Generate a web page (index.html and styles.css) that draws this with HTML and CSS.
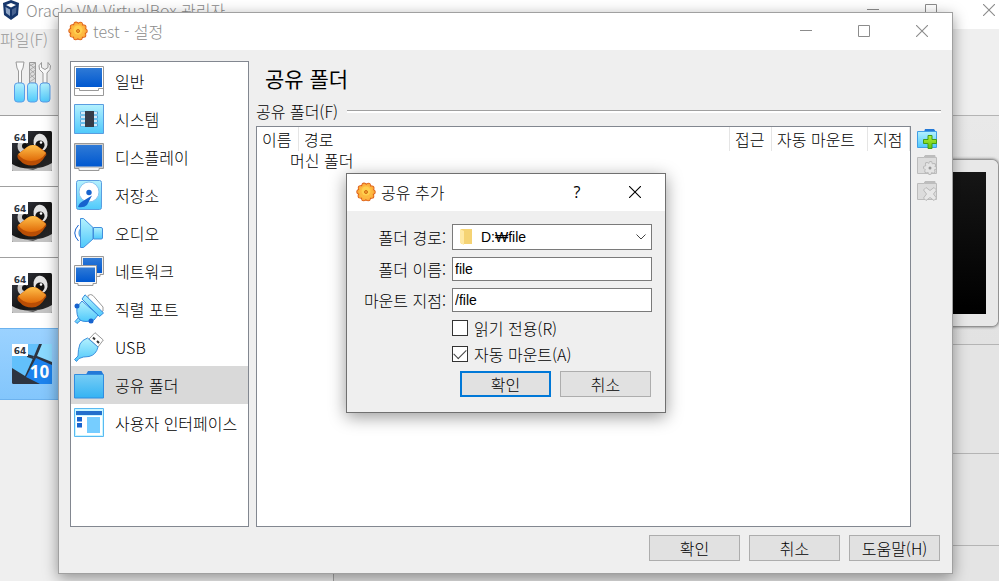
FILE: index.html
```html
<!DOCTYPE html>
<html lang="ko">
<head>
<meta charset="utf-8">
<meta name="viewport" content="width=device-width, initial-scale=1">
<title>test - 설정</title>
<link rel="stylesheet" href="styles.css">
</head>
<body>
<svg class="defs" aria-hidden="true">
  <defs>
    <linearGradient id="screen" x1="0" y1="0" x2="0" y2="1"><stop offset="0" stop-color="#2f7ad6"/><stop offset="1" stop-color="#0058d0"/></linearGradient>
    <linearGradient id="sky" x1="0" y1="0" x2="0" y2="1"><stop offset="0" stop-color="#b4f1fe"/><stop offset="1" stop-color="#4fc9fb"/></linearGradient>
    <linearGradient id="folderFill" x1="0" y1="0" x2="0" y2="1"><stop offset="0" stop-color="#78cdf5"/><stop offset="1" stop-color="#34b3f3"/></linearGradient>
    <linearGradient id="beak" x1="0" y1="0" x2="0" y2="1"><stop offset="0" stop-color="#ffc04a"/><stop offset="1" stop-color="#e06a08"/></linearGradient>
    <linearGradient id="fur" x1="0" y1="0" x2="1" y2="1"><stop offset="0" stop-color="#3a3e4a"/><stop offset=".5" stop-color="#151515"/><stop offset="1" stop-color="#2b2b2b"/></linearGradient>
    <linearGradient id="pane" x1="0" y1="0" x2="1" y2="1"><stop offset="0" stop-color="#8ed8ff"/><stop offset="1" stop-color="#3fa9f6"/></linearGradient>
    <linearGradient id="green" x1="0" y1="0" x2="0" y2="1"><stop offset="0" stop-color="#b4ee3c"/><stop offset="1" stop-color="#5fc40c"/></linearGradient>
  </defs>
  <symbol id="gear" viewBox="0 0 20 20">
    <circle cx="10" cy="10" r="8.600" fill="#dd5f18"/>
    <g fill="none" stroke-linecap="round"><circle cx="10" cy="10" r="7.200" stroke="#dd5f18" stroke-width="5" stroke-dasharray="0 4.524"/><circle cx="10" cy="10" r="6.800" stroke="#fbab3c" stroke-width="4" stroke-dasharray="0 4.273"/></g>
    <circle cx="10" cy="10" r="7" fill="#fdb940"/><circle cx="10" cy="9" r="4.500" fill="#ffd04e"/><circle cx="10" cy="10" r="1.500" fill="#f3a02c" stroke="#cf6c14"/>
  </symbol>
  <symbol id="min" viewBox="0 0 12 12"><path d="M0 5.500h12" stroke="currentColor"/></symbol>
  <symbol id="max" viewBox="0 0 12 12"><path d="M.5.5h11v11H.5z" fill="none" stroke="currentColor"/></symbol>
  <symbol id="close" viewBox="0 0 12 12"><path d="M0 0l12 12M12 0L0 12" stroke="currentColor" stroke-width="1.100"/></symbol>
  <symbol id="tux" viewBox="0 0 40 40">
    <rect width="40" height="40" rx="1.500" fill="url(#fur)"/>
    <path d="M0 33q8 5 20 4.500T40 32v6.500q0 1.500-1.500 1.500h-37Q0 40 0 38.500z" fill="#c4c4c4"/><path d="M12 37.300q8 1 17-1.500l-8 3.200z" fill="#555"/>
    <ellipse cx="28.500" cy="11.500" rx="7" ry="8.800" fill="#e4e4e4" transform="rotate(-10 28.500 11.500)"/><circle cx="28" cy="14" r="4.600" fill="#111"/><circle cx="29" cy="11.500" r="1.300" fill="#fff"/>
    <ellipse cx="10.500" cy="15" rx="5" ry="7" fill="#ccc"/><circle cx="13" cy="15" r="3" fill="#111"/>
    <path d="M5.500 24q4-4 9-7.500 6-4 11-1.500 5 3 8.500 6.500 1 2-1 4-5 9-13 9-8 0-12-5-3-2-2.500-5.500z" fill="#b94e05"/>
    <path d="M6 23q5-3 9-7 5-3.500 10-1 4 3 9 7-5 8-15 8-8 0-13-7z" fill="url(#beak)"/>
    <rect width="16" height="12" fill="#fff"/><text x="8" y="10" class="badge">64</text>
  </symbol>
  <symbol id="win10" viewBox="0 0 40 40">
    <rect width="40" height="40" rx="1.500" fill="#2d3441"/>
    <path d="M0 8L16 0h11l-5 12-9 20L0 24z" fill="#62c0fb"/><path d="M15 10l7 2-1 3-6-2z" fill="#2d3441"/><path d="M30 0h10v18l-15-6z" fill="#8bdaff"/><path d="M24 14l16 7v19H28l-14-7z" fill="#1c83ee"/>
    <rect width="16" height="12" fill="#fff"/><text x="8" y="10" class="badge">64</text><text x="27.500" y="34" class="ten">10</text>
  </symbol>
  <symbol id="monitor" viewBox="0 0 30 30"><path d="M.5 1.500h29v25H25v2H5v-2H.5z" fill="#f4f4f4" stroke="#999"/><path d="M1 2h28v24H1z" fill="#ccc"/><path d="M2 3h26v21.500H2z" fill="url(#screen)"/></symbol>
  <symbol id="folderGrey" viewBox="0 0 20 20"><path d="M.5 2.500H7l1-2h10v2h1.500v16H.5z" fill="#dcdcdc" stroke="#bcbcbc"/><path d="M8 1h10v2H7z" fill="#bdbdbd"/></symbol>
</svg>

<main class="desktop">
  <section class="window manager" aria-label="Oracle VM VirtualBox 관리자">
    <header class="titlebar">
      <svg class="app-icon" viewBox="0 0 20 20"><path d="M10 0l8 3-1 12-7 5-7-5L2 3z" fill="#16366b"/><path d="M10 3l5 2-5 2.500L5 5z" fill="#fff"/><path d="M4.500 7L9 9.500V16l-4-3z" fill="#8ea4c5"/><path d="M15.500 7L11 9.500V16l4-3z" fill="#486391"/></svg>
      <span class="caption">Oracle VM VirtualBox 관리자</span>
      <div class="controls"><button aria-label="최소화"><svg><use href="#min"/></svg></button><button aria-label="최대화"><svg><use href="#max"/></svg></button><button aria-label="닫기"><svg><use href="#close"/></svg></button></div>
    </header>
    <nav class="menubar"><button>파일(F)</button></nav>
    <div class="manager-body">
      <div class="machines">
        <div class="tools"><svg viewBox="0 0 38 42">
          <path d="M2 1h8l-1 6-1.500 3v12h-3V10L3 7z" fill="#fafafa" stroke="#999"/>
          <path d="M15.500 1.500h6V22h-6z" fill="#ddd" stroke="#999"/><path d="M15.500 5l6-3M15.500 9l6-4M15.500 13l6-4M15.500 17l6-4M15.500 21l6-4M15.500 3l6 5M15.500 8l6 5M15.500 13l6 5" stroke="#999" stroke-width=".7"/>
          <path d="M27.500 1.500q-4 3-2 7l3.500 3.500v10h4V12l3-3.500q2-4-2-7v5l-3 2-3.500-2z" fill="#fafafa" stroke="#999"/>
          <g fill="url(#sky)" stroke="#5a9de8"><rect x=".5" y="22" width="10" height="19" rx="3"/><rect x="13.500" y="22" width="10" height="19" rx="3"/><rect x="26" y="22" width="10" height="19" rx="3"/></g></svg></div>
        <ul class="machine-list">
          <li><svg><use href="#tux"/></svg></li><li><svg><use href="#tux"/></svg></li><li><svg><use href="#tux"/></svg></li>
          <li class="active"><svg><use href="#win10"/></svg></li>
        </ul>
      </div>
      <div class="details"><div class="band head"></div><div class="band preview"><div class="display"></div></div><div class="band mid"></div><div class="band low"></div><div class="rest"></div></div>
    </div>
  </section>

  <section class="window settings" aria-label="test - 설정">
    <header class="titlebar">
      <svg class="app-icon"><use href="#gear"/></svg><h1 class="caption">test - 설정</h1>
      <div class="controls"><button aria-label="최소화"><svg><use href="#min"/></svg></button><button aria-label="최대화"><svg><use href="#max"/></svg></button><button aria-label="닫기"><svg><use href="#close"/></svg></button></div>
    </header>
    <div class="settings-body">
      <nav class="categories">
        <button><svg viewBox="0 0 30 30"><path d="M.5.500h29v29H.5z" fill="#fff" stroke="#999"/><path d="M2 2h26v19H2z" fill="url(#screen)"/><path d="M1 22.500h4.500v2h19v-2H29" fill="none" stroke="#999"/></svg>일반</button>
        <button><svg viewBox="0 0 30 30"><path d="M.5.5h29v29H.5z" fill="url(#sky)" stroke="#5a9de0"/><path d="M6 9h18M6 13h18M6 17h18M6 21h18" stroke="#5aa4dc" stroke-width="3"/><path d="M7 9h16M7 13h16M7 17h16M7 21h16" stroke="#fff" stroke-width="1.500"/><path d="M11 7h9v16h-9z" fill="#353c49"/></svg>시스템</button>
        <button><svg><use href="#monitor"/></svg>디스플레이</button>
        <button><svg viewBox="0 0 30 30"><rect x="2.500" y=".5" width="25" height="29" rx="2" fill="url(#sky)" stroke="#5a9de0"/><circle cx="15" cy="12" r="10" fill="#fff" stroke="#8cc5f0"/><circle cx="15" cy="12.500" r="2.700" fill="#1763ce"/><path d="M18 15.500L13 25q-3 3-9 2 1-4 5-6z" fill="#1763ce"/></svg>저장소</button>
        <button><svg viewBox="0 0 30 30"><g fill="url(#sky)" stroke="#428fdd"><path d="M9 10q-4 0-4 5t4 5z"/><path d="M6.500.500h3L19 9.500V21L9.500 29.500h-3z"/><path d="M19.500 9.500h7.500q1.500 0 1.500 1.500v9q0 1-1.500 1h-7.500z"/></g><path d="M4.500 7Q-3 15 4.500 23" fill="none" stroke="#1763ce"/></svg>오디오</button>
        <button><svg viewBox="0 0 30 30"><path d="M7.500.500h22v18H26v2H7.500z" fill="#eee" stroke="#999"/><path d="M9 2h19v15H9z" fill="url(#screen)"/><path d="M.5 9.500h22v18H19v2H4v-2H.5z" fill="#f7f7f7" stroke="#999"/><path d="M2 11.500h19V26H2z" fill="url(#screen)"/></svg>네트워크</button>
        <button><svg viewBox="0 0 30 30"><path d="M14 1.500q3-2 5 0L29 13v4l-3 2L14 5z" fill="#fff" stroke="#999"/><g fill="url(#sky)" stroke="#348bdd"><path d="M5 23l3 2-5 4.500-2-2z"/><path d="M8 7l16 14-4 5q-9 3-14 0-4-4-3-13z"/><path d="M11 .8L29.500 19l-4 3.500L8 5z"/></g><circle cx="3" cy="12" r="2.500" fill="#1763ce"/><circle cx="17" cy="27" r="2.500" fill="#1763ce"/></svg>직렬 포트</button>
        <button><svg viewBox="0 0 30 30"><path d="M21 .7L29.300 8 24 15l-9-8z" fill="#fff" stroke="#999"/><path d="M13.500 6L24 15q-2 8-9 9.500-6 0-10 2L2.500 29.500.5 27.500 4 24q0-7 2-12 2-4 7.500-6z" fill="url(#sky)" stroke="#3c91de"/><path d="M19 5.500l2 2M23 9l2 2" stroke="#333" stroke-width="2"/></svg>USB</button>
        <button class="active" aria-current="page"><svg viewBox="0 0 30 30"><path d="M12 4.500l2-3.500h13.500l2 3.500z" fill="#2479d7"/><path d="M.5 4.500h29v23.500H.5z" fill="url(#folderFill)" stroke="#318de0"/></svg>공유 폴더</button>
        <button><svg viewBox="0 0 30 30"><path d="M.5.5h29v28H.5z" fill="#c9f6ff" stroke="#59b9f2"/><path d="M2 8h26v19H2z" fill="#fff"/><path d="M2 3h26v4H2z" fill="#236fcc"/><path d="M3 9h5v4.500H3zM3 15h5v4.500H3z" fill="#1763ce"/><path d="M13 9h13v16H13z" fill="#76cdff"/></svg>사용자 인터페이스</button>
      </nav>
      <div class="page">
        <h2>공유 폴더</h2>
        <div class="group-title"><span>공유 폴더(F)</span></div>
        <div class="folders">
          <div class="tree">
            <table>
              <colgroup><col class="narrow"><col><col class="narrow"><col class="wide"><col class="narrow"></colgroup>
              <thead><tr><th>이름</th><th>경로</th><th>접근</th><th>자동 마운트</th><th>지점</th></tr></thead>
              <tbody><tr><td colspan="5">머신 폴더</td></tr></tbody>
            </table>
          </div>
          <div class="actions">
            <button aria-label="공유 폴더 추가"><svg viewBox="0 0 20 20"><path d="M7 3l1-3h9l2 3z" fill="#2479d7"/><path d="M.5 2.500h19v16H.5z" fill="url(#sky)" stroke="#419ee6"/><path d="M11 6.500h4v4h4.500v4H15v5h-4v-5H6.500v-4H11z" fill="url(#green)" stroke="#429e17"/></svg></button>
            <button aria-label="공유 폴더 편집" disabled><svg viewBox="0 0 20 20"><use href="#folderGrey"/><g fill="none" stroke-linecap="round"><circle cx="13" cy="13" r="5" stroke="#b5b5b5" stroke-width="4" stroke-dasharray="0 3.927"/><circle cx="13" cy="13" r="4.700" stroke="#e4e4e4" stroke-width="2.600" stroke-dasharray="0 3.691"/></g><circle cx="13" cy="13" r="4.600" fill="#e4e4e4"/><circle cx="13" cy="13" r="1.500" fill="#999"/></svg></button>
            <button aria-label="공유 폴더 제거" disabled><svg viewBox="0 0 20 20"><use href="#folderGrey"/><path d="M9 6.500l4 3 4-3 2.500 2.500-3 4 3 4-2.500 2.500-4-3-4 3L6.500 17l3-4-3-4z" fill="#e7e7e7" stroke="#b9b9b9" stroke-linejoin="round"/></svg></button>
          </div>
        </div>
      </div>
    </div>
    <footer class="buttons"><button class="push">확인</button><button class="push">취소</button><button class="push">도움말(H)</button></footer>
  </section>

  <section class="window share" role="dialog" aria-label="공유 추가">
    <header class="titlebar">
      <svg class="app-icon"><use href="#gear"/></svg><h2 class="caption">공유 추가</h2>
      <div class="controls"><button aria-label="도움말" class="help">?</button><button aria-label="닫기"><svg><use href="#close"/></svg></button></div>
    </header>
    <form class="share-form">
      <label for="path">폴더 경로:</label>
      <div class="path">
        <select id="path"><option>D:₩file</option></select>
        <svg class="folder" viewBox="0 0 12 18"><path d="M1 1h11v15H1z" fill="#f5d374"/><path d="M0 1l4 2v14L0 15z" fill="#ffe9a5"/></svg>
        <svg class="chevron" viewBox="0 0 10 6"><path d="M.5.500L5 5 9.500.500" fill="none" stroke="#444"/></svg>
      </div>
      <label for="name">폴더 이름:</label><input id="name" type="text" value="file">
      <label for="mount">마운트 지점:</label><input id="mount" type="text" value="/file">
      <label class="check"><input type="checkbox">읽기 전용(R)</label>
      <label class="check"><input type="checkbox" checked>자동 마운트(A)</label>
      <div class="buttons"><button type="button" class="push primary">확인</button><button type="button" class="push">취소</button></div>
    </form>
  </section>
</main>
</body>
</html>
```
FILE: styles.css
```css
* { box-sizing: border-box; }

body {
  margin: 0;
  font: 300 16px/20px "Noto Sans CJK KR", sans-serif;
  color: #000;
}

button, input, select { font: inherit; color: inherit; margin: 0; padding: 0; }
button { border: 0; background: none; }
h1, h2, ul { margin: 0; padding: 0; font-weight: inherit; }
ul { list-style: none; }
svg { display: block; flex: none; }
.defs { position: absolute; width: 0; height: 0; }
.badge { font: bold 9px "DejaVu Sans", sans-serif; fill: #2d3441; text-anchor: middle; }
.ten { font: bold 17px "Noto Sans", sans-serif; fill: #fff; text-anchor: middle; }

.desktop { position: relative; height: 100vh; overflow: hidden; background: #efefef; }
.window { position: absolute; display: flex; flex-direction: column; background: #efefef; }

/* Title bars */
.titlebar {
  display: flex;
  align-items: center;
  flex: none;
  height: 37px;
  padding: 0 0 2px 9px;
  gap: 5px;
  background: #fff;
}
.app-icon { width: 20px; height: 20px; }
.caption { flex: 1; font-size: 16px; line-height: 20px; white-space: nowrap; color: #8c8c8c; }
.controls { display: flex; padding-right: 1px; color: #8c8c8c; }
.controls button { display: grid; place-items: center; width: 58px; height: 34px; }
.controls svg { width: 12px; height: 12px; }

/* Manager window */
.manager { top: -8px; right: -20px; bottom: 0; left: 0; }
.manager .titlebar { padding-left: 1px; }
.menubar { flex: none; height: 21px; color: #999; }
.menubar button { display: block; font-size: 16px; line-height: 20px; }
.manager-body { display: flex; flex: 1; }
.machines { flex: none; width: 334px; border-right: 1px solid #a8a8a8; }
.tools { height: 65px; padding: 11px 14px; }
.tools svg { width: 38px; height: 42px; }
.machine-list li { height: 71px; padding: 15px 12px; border-top: 1px solid #a0a0a0; background: #fff; }
.machine-list svg { width: 40px; height: 40px; }
.machine-list .active { border-top-color: #6cb2ee; border-bottom: 1px solid #6cb2ee; background: linear-gradient(#9bd2ff, #83c6fc); height: 72px; }
.details { display: flex; flex-direction: column; flex: 1; background: #e4e4e4; }
.band { flex: none; border-bottom: 1px solid #b4b4b4; }
.head { height: 66px; background: #efefef; }
.preview { height: 229px; padding: 44px 21px 0; background: linear-gradient(#e9e9e9, #e2e2e2); }
.display {
  height: 166px;
  border: 12px solid #e8e8e8;
  border-radius: 6px;
  background: linear-gradient(#161616, #000);
  box-shadow: 0 0 3px 1px #666;
}
.mid { height: 109px; }
.low { height: 92px; }
.rest { flex: 1; }

/* Settings window */
.settings {
  top: 12px; right: 46px; bottom: 7px; left: 58px;
  border: 1px solid #a0a0a0;
  box-shadow: 0 4px 14px rgba(0, 0, 0, .4);
}
.settings-body { display: flex; flex: 1; gap: 7px; min-height: 0; padding: 11px 11px 0; }
.categories { flex: none; width: 179px; border: 1px solid #828790; background: #fff; }
.categories button { display: flex; align-items: center; gap: 11px; width: 100%; height: 38px; padding-left: 3px; text-align: left; }
.categories svg { width: 30px; height: 30px; }
.categories .active { background: #d9d9d9; }
.page { display: flex; flex-direction: column; flex: 1; min-width: 0; }
.page h2 { padding: 5px 9px 0; font-size: 21px; line-height: 24px; font-weight: 400; }
.group-title { display: flex; align-items: center; gap: 9px; margin: 11px 0 5px; }
.group-title::after { content: ""; flex: 1; height: 2px; border-top: 1px solid #a0a0a0; background: #fff; }
.folders { display: flex; flex: 1; gap: 6px; min-height: 0; }
.tree { flex: 1; border: 1px solid #828790; background: #fff; }
.tree table { width: 100%; table-layout: fixed; border-collapse: separate; border-spacing: 0; }
.tree .narrow { width: 42px; }
.tree .wide { width: 96px; }
.tree th { height: 24px; padding: 0 0 0 5px; border-right: 1px solid #e5e5e5; font-weight: inherit; text-align: left; white-space: nowrap; }
.tree td { height: 18px; padding: 0 0 0 33px; line-height: 18px; }
.actions { display: flex; flex-direction: column; gap: 6px; padding: 3px 4px 0 0; }
.actions svg { width: 20px; height: 20px; }
.buttons { display: flex; justify-content: flex-end; gap: 9px; }
.settings > .buttons { padding: 8px 12px 12px; }
.push { width: 91px; height: 26px; border: 1px solid #adadad; background: #e1e1e1; font-size: 16px; line-height: 20px; }
.push.primary { border: 2px solid #0078d7; }

/* Add share dialog */
.share {
  top: 173px; left: 346px;
  width: 320px;
  border: 1px solid #707070;
  box-shadow: 0 4px 16px rgba(0, 0, 0, .4);
}
.share .caption, .share .controls { color: #000; }
.help { font: 16px/20px "Open Sans", sans-serif; }
.share-form {
  display: grid;
  grid-template-columns: 93px 1fr;
  grid-template-rows: 26px 24px 24px 18px 20px 26px;
  align-items: center;
  gap: 7px 6px;
  padding: 13px 13px 15px 6px;
}
.share-form label { text-align: right; font-size: 16px; white-space: nowrap; }
.share-form .check { grid-column: 2; display: flex; align-items: center; gap: 6px; }
.share-form .buttons { grid-column: 1 / -1; padding-right: 1px; }
.path { position: relative; }
.path select, .share-form input[type="text"] {
  width: 100%;
  height: 24px;
  padding: 0 2px;
  border: 1px solid #7a7a7a;
  border-radius: 0;
  background: #fff;
  font-family: "Liberation Sans", "Noto Sans CJK KR", sans-serif;
  font-size: 14px;
}
.path select { display: block; appearance: none; height: 26px; padding-left: 28px; }
.folder { position: absolute; top: 4px; left: 8px; width: 12px; height: 18px; }
.chevron { position: absolute; top: 10px; right: 6px; width: 10px; height: 6px; }
.check input { appearance: none; display: grid; place-items: center; width: 16px; height: 16px; border: 1px solid #333; background: #fff; }
.check input:checked::before { content: ""; width: 11px; height: 6px; margin-bottom: 3px; border: solid #444; border-width: 0 0 1px 1px; rotate: -45deg; }
```
